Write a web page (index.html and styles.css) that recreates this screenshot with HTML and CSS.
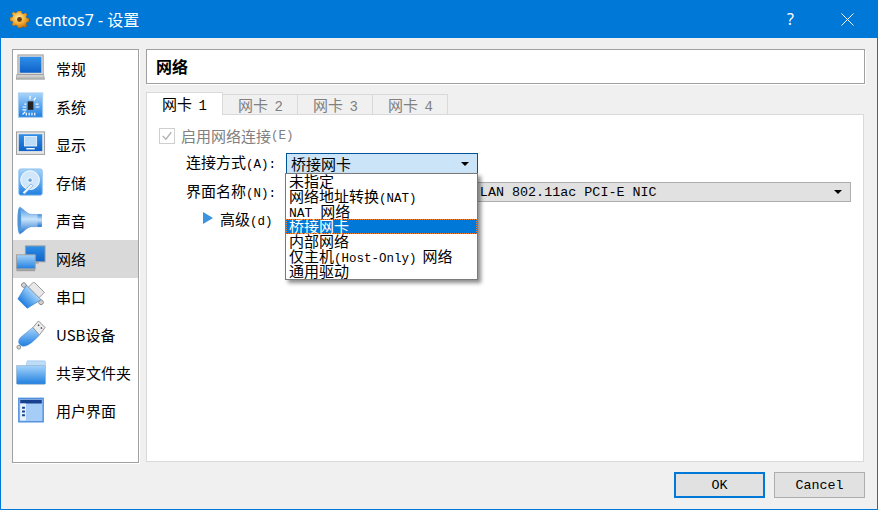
FILE: index.html
```html
<!DOCTYPE html>
<html lang="zh-CN">
<head>
    <meta charset="UTF-8">
    <title>centos7 - 设置</title>
    <link rel="stylesheet" href="styles.css">
</head>
<body>
    <!-- shared gradients for the settings icons -->
    <svg class="icon-defs" width="0" height="0">
        <defs>
            <linearGradient id="blue" x1="0" y1="0" x2="0" y2="1">
                <stop offset="0" stop-color="#a6d4fa"/>
                <stop offset="1" stop-color="#1f7fe0"/>
            </linearGradient>
            <linearGradient id="blueDark" x1="0" y1="0" x2="0" y2="1">
                <stop offset="0" stop-color="#2f8fe8"/>
                <stop offset="1" stop-color="#0f62c8"/>
            </linearGradient>
            <linearGradient id="horn" x1="0" y1="0" x2="0" y2="1">
                <stop offset="0" stop-color="#3f8fdc"/>
                <stop offset=".45" stop-color="#c8e4fb"/>
                <stop offset="1" stop-color="#1f6fd0"/>
            </linearGradient>
            <linearGradient id="gray" x1="0" y1="0" x2="0" y2="1">
                <stop offset="0" stop-color="#e2e2e2"/>
                <stop offset="1" stop-color="#a8a8a8"/>
            </linearGradient>
            <radialGradient id="gear" cx=".45" cy=".4" r=".65">
                <stop offset="0" stop-color="#fff0b0"/>
                <stop offset=".55" stop-color="#f2a92e"/>
                <stop offset="1" stop-color="#b5670f"/>
            </radialGradient>
        </defs>
    </svg>

    <div class="window">
        <header class="titlebar">
            <svg class="app-icon" viewBox="0 0 20 20">
                <g fill="url(#gear)" stroke="#7a4a12" stroke-width=".3">
                    <path d="M8 1h4l.5 2.4 1.6.7 2.1-1.3 2 2-1.3 2.1.7 1.600 2.400.5v3.600l-2.400.5-.7 1.600 1.300 2.100-2 2-2.100-1.300-1.600.7L12 19H8l-.5-2.400-1.600-.7-2.100 1.300-2-2 1.300-2.100-.7-1.600L0 11.600V8l2.400-.5.7-1.600-1.300-2.100 2-2 2.100 1.300 1.600-.7z"/>
                </g>
                <circle cx="10" cy="10" r="2.600" fill="#6b3d0c"/>
            </svg>
            <span class="title">centos7 - 设置</span>
            <span class="help">?</span>
            <svg class="close" viewBox="0 0 13 13"><path d="M.5.5l12 12M12.500.5l-12 12" stroke="#fff" fill="none"/></svg>
        </header>

        <div class="content">
            <nav class="sidebar">
                <div class="nav-item">
                    <svg class="nav-icon" viewBox="0 0 32 32">
                        <rect x="2" y="1" width="27" height="21" fill="#d8d8d8" stroke="#9a9a9a"/>
                        <rect x="4" y="3" width="23" height="17" fill="url(#blueDark)"/>
                        <path d="M.5 22h29l1 5H0z" fill="url(#gray)" stroke="#8f8f8f" stroke-width=".6"/>
                    </svg>
                    <span>常规</span>
                </div>
                <div class="nav-item">
                    <svg class="nav-icon" viewBox="0 0 32 32">
                        <rect x="2.500" y="1" width="26" height="26" fill="url(#blue)" stroke="#a9cdf0"/>
                        <rect x="12.500" y="10" width="6" height="9" fill="#222"/>
                        <path d="M15 4v4M21 6l-2 3M9 13h2M7 16h4M7 19h4M21 13h3M21 16h4M11 22v3M14 22v3M17 22v3M20 22v3M7 24l3-3" stroke="#fff" stroke-width="1.300" fill="none"/>
                    </svg>
                    <span>系统</span>
                </div>
                <div class="nav-item">
                    <svg class="nav-icon" viewBox="0 0 32 32">
                        <rect x=".5" y="2" width="30" height="24" fill="#e6e6e6" stroke="#9a9a9a"/>
                        <rect x="3" y="4.500" width="25" height="18" fill="url(#blueDark)"/>
                        <rect x="9" y="7" width="13" height="10" fill="#bcdcf8" stroke="#e8f4ff"/>
                        <path d="M11 20h9" stroke="#fff" stroke-width="1.500"/>
                    </svg>
                    <span>显示</span>
                </div>
                <div class="nav-item">
                    <svg class="nav-icon" viewBox="0 0 32 32">
                        <rect x="3" y="1" width="25" height="28" rx="2" fill="url(#blue)" stroke="#8fc0ec"/>
                        <circle cx="15" cy="13" r="10" fill="#cfe6fb" stroke="#fff"/>
                        <circle cx="15" cy="13" r="2.500" fill="#6aa6dc" stroke="#fff"/>
                        <path d="M7 26l9-9 2 2-9 9z" fill="#eaf5ff" stroke="#4f94d8" stroke-width=".6"/>
                    </svg>
                    <span>存储</span>
                </div>
                <div class="nav-item">
                    <svg class="nav-icon" viewBox="0 0 32 32">
                        <path d="M4 1c5 3 8 8 13 8h10v13H17c-5 0-8 5-13 8z" fill="url(#horn)" stroke="#5a9ade" stroke-width=".6"/>
                        <ellipse cx="3.500" cy="15.500" rx="2" ry="14" fill="#4f94d8"/>
                        <rect x="23" y="9" width="4.500" height="13" fill="url(#horn)"/>
                    </svg>
                    <span>声音</span>
                </div>
                <div class="nav-item selected">
                    <svg class="nav-icon" viewBox="0 0 32 32">
                        <rect x="10" y="2" width="21" height="17" fill="url(#blueDark)" stroke="#a0a0a0"/>
                        <rect x="10" y="19" width="14" height="2" fill="#a8a8a8"/>
                        <rect x=".5" y="11.500" width="20" height="15" fill="url(#blue)" stroke="#a0a0a0"/>
                        <path d="M.5 27h20v2H.5z" fill="#9c9c9c"/>
                    </svg>
                    <span>网络</span>
                </div>
                <div class="nav-item">
                    <svg class="nav-icon" viewBox="0 0 32 32">
                        <g transform="translate(-2 0) rotate(45 16 16)">
                            <path d="M5 9h22l-4 17H9z" fill="url(#blue)" stroke="#3f86d6" stroke-width=".8"/>
                            <rect x="8" y="1" width="16" height="8" fill="#e8e8e8" stroke="#9a9a9a"/>
                            <circle cx="3" cy="11" r="2.500" fill="#d0d0d0" stroke="#8a8a8a"/>
                            <circle cx="29" cy="11" r="2.500" fill="#d0d0d0" stroke="#8a8a8a"/>
                        </g>
                    </svg>
                    <span>串口</span>
                </div>
                <div class="nav-item">
                    <svg class="nav-icon" viewBox="0 0 32 32">
                        <path d="M18 8l7 8c-3 3-7 8-13 11-3 1.500-6 1-8-1s-1-5 .5-7c4-4 9-7 13.500-11z" fill="url(#blue)" stroke="#3f86d6" stroke-width=".6"/>
                        <path d="M18 8l6-7 7 7-6 8z" fill="#ececec" stroke="#8f8f8f"/>
                        <path d="M23.500 5l1.200 1.200M26.500 8l1.200 1.200" stroke="#444" stroke-width="1.500"/>
                        <circle cx="3" cy="29" r="2" fill="#d8d8d8" stroke="#8a8a8a"/>
                    </svg>
                    <span>USB设备</span>
                </div>
                <div class="nav-item">
                    <svg class="nav-icon" viewBox="0 0 32 32">
                        <path d="M12 3h18c1 0 1.500.5 1.500 1.500V10H10z" fill="#bcdcf8" stroke="#9cc4ea" stroke-width=".6"/>
                        <path d="M.5 8h30c.5 0 1 .5 1 1v18c0 .5-.5 1-1 1H1.500c-.5 0-1-.5-1-1z" fill="url(#blue)" stroke="#8fa9c4" stroke-width=".6"/>
                    </svg>
                    <span>共享文件夹</span>
                </div>
                <div class="nav-item">
                    <svg class="nav-icon" viewBox="0 0 32 32">
                        <rect x="3" y="2.500" width="26" height="25" fill="#a6cdf8" stroke="#4f8ede" stroke-width="1.500"/>
                        <rect x="4.500" y="4" width="23" height="4" fill="#17408f"/>
                        <rect x="4.500" y="8" width="6" height="18" fill="#e8f2fc"/>
                        <path d="M6.500 12.500h3M6.500 16.500h3M6.500 20.500h3" stroke="#17408f" stroke-width="2"/>
                    </svg>
                    <span>用户界面</span>
                </div>
            </nav>

            <main class="main">
                <h1 class="page-title">网络</h1>

                <div class="tabs">
                    <div class="tab active">网卡 <span class="la">1</span></div>
                    <div class="tab">网卡 <span class="la">2</span></div>
                    <div class="tab">网卡 <span class="la">3</span></div>
                    <div class="tab">网卡 <span class="la">4</span></div>
                </div>

                <section class="panel">
                    <label class="enable">
                        <span class="checkbox">
                            <svg viewBox="0 0 13 13"><path d="M2.500 6.500l3 3 5-6.500" fill="none" stroke="#b4b4b4" stroke-width="1.300"/></svg>
                        </span>
                        启用网络连接<span class="la">(E)</span>
                    </label>

                    <div class="form-row first">
                        <span class="form-label">连接方式<span class="la">(A):</span></span>
                        <div class="combo open">
                            <span>桥接网卡</span>
                            <i class="arrow"></i>
                        </div>
                    </div>
                    <div class="form-row second">
                        <span class="form-label">界面名称<span class="la">(N):</span></span>
                        <div class="combo wide">
                            <span class="la nic">Realtek 8822BE Wireless LAN 802.11ac PCI-E NIC</span>
                            <i class="arrow"></i>
                        </div>
                    </div>
                    <div class="advanced">
                        <i class="expander"></i>
                        <span>高级<span class="la">(d)</span></span>
                    </div>

                    <ul class="popup">
                        <li>未指定</li>
                        <li>网络地址转换<span class="la">(NAT)</span></li>
                        <li class="nat"><span class="la">NAT </span>网络</li>
                        <li class="current">桥接网卡</li>
                        <li>内部网络</li>
                        <li>仅主机<span class="la host">(Host-Only)</span>网络</li>
                        <li>通用驱动</li>
                    </ul>
                </section>
            </main>
        </div>

        <footer class="footer">
            <button class="btn default">OK</button>
            <button class="btn">Cancel</button>
        </footer>
    </div>
</body>
</html>
```

FILE: styles.css
```css
* {
    box-sizing: border-box;
}
body {
    margin: 0;
    background-color: #f0f0f0;
    font-family: "Noto Sans CJK SC", sans-serif;
    font-size: 15px;
    color: #000;
}
.icon-defs {
    position: absolute;
}
.window {
    width: 878px;
    height: 510px;
    display: flex;
    flex-direction: column;
    background-color: #f0f0f0;
    border: 1px solid #0078d7;
    border-top: 0;
}
.titlebar {
    height: 38px;
    flex: none;
    margin: 0 -1px;
    padding: 0 0 0 10px;
    display: flex;
    align-items: center;
    background-color: #0078d7;
    color: #fff;
}
.app-icon {
    width: 19px;
    height: 19px;
    margin-right: 6px;
}
.title {
    font-family: "Noto Sans", "Noto Sans CJK SC", sans-serif;
    font-size: 16px;
    flex: 1;
}
.help {
    font-family: "Noto Sans", sans-serif;
    font-size: 16px;
    margin-right: 47px;
}
.close {
    width: 13px;
    height: 13px;
    margin-right: 24px;
}

.content {
    flex: 1;
    min-height: 0;
    display: flex;
    gap: 7px;
    padding: 11px 12px 0 11px;
}
.sidebar {
    width: 127px;
    height: 414px;
    flex: none;
    background-color: #fff;
    border: 1px solid #a0a0a0;
    box-shadow: 1px 1px 0 #fff;
}
.nav-item {
    height: 38px;
    display: flex;
    align-items: center;
    line-height: 20px;
    white-space: nowrap;
}
.nav-item.selected {
    background-color: #d9d9d9;
}
.nav-icon {
    width: 30px;
    height: 30px;
    flex: none;
    margin: 0 10px 0 3px;
}

.main {
    flex: 1;
    min-width: 0;
}
.page-title {
    height: 35px;
    margin: 0;
    padding-left: 9px;
    background-color: #fff;
    border: 1px solid #a0a0a0;
    box-shadow: 1px 1px 0 #fff;
    font-size: 16px;
    font-weight: 700;
    line-height: 33px;
}
.tabs {
    display: flex;
    align-items: flex-end;
    height: 23px;
    margin: 8px 0 -1px;
    position: relative;
    z-index: 1;
}
.tab {
    width: 75px;
    height: 21px;
    padding-left: 15px;
    background-color: #f0f0f0;
    border: 1px solid #d9d9d9;
    border-left: 0;
    color: #808080;
    line-height: 19px;
    word-spacing: 3px;
}
.tab.active {
    width: 77px;
    height: 23px;
    background-color: #fff;
    border-left: 1px solid #d9d9d9;
    border-bottom: 0;
    color: #000;
    line-height: 21px;
}
.panel {
    position: relative;
    width: 718px;
    height: 348px;
    background-color: #fff;
    border: 1px solid #d9d9d9;
}
.la {
    font-family: "Liberation Mono", monospace;
    font-size: 12.5px;
}
.tab .la {
    font-size: 14px;
}
.enable {
    display: flex;
    align-items: center;
    height: 16px;
    margin: 13px 0 0 12px;
    color: #808080;
    line-height: 16px;
}
.checkbox {
    width: 16px;
    height: 16px;
    margin-right: 6px;
    border: 1px solid #cfcfcf;
}
.checkbox svg {
    display: block;
}
.form-row {
    display: flex;
    align-items: center;
    padding-left: 39px;
}
.form-row.first {
    height: 21px;
    margin-top: 9px;
}
.form-row.second {
    height: 20px;
    margin-top: 8px;
}
.form-label {
    width: 100px;
    flex: none;
    line-height: 19px;
}
.combo {
    display: flex;
    justify-content: space-between;
    align-items: center;
    width: 192px;
    height: 21px;
    padding: 0 8px 0 4px;
    background-color: #e1e1e1;
    border: 1px solid #adadad;
    line-height: 19px;
    white-space: nowrap;
}
.combo.open {
    background-color: #cce4f7;
    border-color: #005499;
}
.combo.wide {
    width: 565px;
    height: 20px;
}
.nic {
    font-size: 13.4px;
    margin-left: -4px;
}
.arrow {
    width: 0;
    height: 0;
    border-left: 4px solid transparent;
    border-right: 4px solid transparent;
    border-top: 4px solid #000;
}
.advanced {
    display: flex;
    align-items: center;
    height: 20px;
    margin: 6px 0 0 56px;
}
.expander {
    width: 0;
    height: 0;
    margin-right: 7px;
    border-top: 6px solid transparent;
    border-bottom: 6px solid transparent;
    border-left: 10px solid #3c93e0;
}

/* open list of the connection type combo, drawn over the form */
.popup {
    position: absolute;
    left: 138px;
    top: 58px;
    width: 193px;
    margin: 0;
    padding: 0;
    list-style: none;
    background-color: #fff;
    border: 1px solid #7a7a7a;
    box-shadow: 3px 3px 4px rgba(0, 0, 0, .45);
    z-index: 2;
}
.popup li {
    height: 15px;
    padding-left: 3px;
    line-height: 13px;
    white-space: nowrap;
}
.popup li.nat .la {
    font-size: 13px;
}
.popup li.current {
    background-color: #0078d7;
    color: #fff;
    outline: 1px dotted #f08030;
    outline-offset: -1px;
}
.host {
    margin-right: 6px;
}

.footer {
    height: 47px;
    flex: none;
    display: flex;
    justify-content: flex-end;
    gap: 9px;
    padding: 10px 12px 0 0;
}
.btn {
    width: 91px;
    height: 26px;
    padding: 0;
    background-color: #e1e1e1;
    border: 1px solid #adadad;
    font-family: "Liberation Mono", monospace;
    font-size: 13.4px;
    color: #000;
}
.btn.default {
    border: 2px solid #0078d7;
}
```
